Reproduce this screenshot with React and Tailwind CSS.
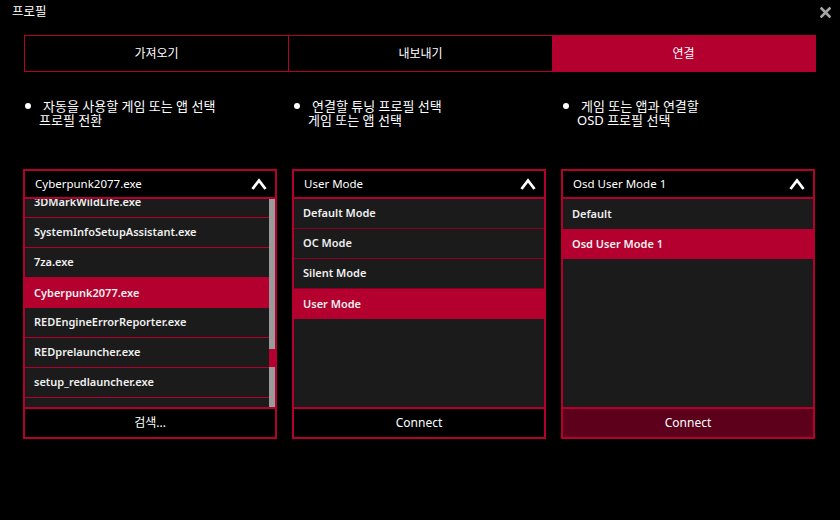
import React from 'react';

const RED = 'border-[#b4002e]';

const exeList = [
    '3DMarkWildLife.exe',
    'SystemInfoSetupAssistant.exe',
    '7za.exe',
    'Cyberpunk2077.exe',
    'REDEngineErrorReporter.exe',
    'REDprelauncher.exe',
    'setup_redlauncher.exe',
    '',
];

const tuningModes = ['Default Mode', 'OC Mode', 'Silent Mode', 'User Mode'];
const osdModes = ['Default', 'Osd User Mode 1'];

const Caret = () => (
    <svg width="16" height="12" viewBox="0 0 16 12" className="shrink-0">
        <polyline points="1.5,11 8,2.5 14.5,11" fill="none" stroke="#fff" strokeWidth="2.8" strokeLinejoin="miter" />
    </svg>
);

const CloseIcon = () => (
    <svg width="11" height="11" viewBox="0 0 11 11">
        <path d="M1.5 1.5 L9.5 9.5 M9.5 1.5 L1.5 9.5" stroke="#a6a6a6" strokeWidth="2.6" strokeLinecap="square" />
    </svg>
);

const Bullet = ({ lines }) => (
    <div className="flex items-start text-[13px] leading-[14px] text-white">
        <span className="mt-[4px] ml-[1px] w-[6px] h-[6px] rounded-full bg-white shrink-0" />
        <div className="ml-[8px]">
            <p className="indent-[4px]">{lines[0]}</p>
            <p>{lines[1]}</p>
        </div>
    </div>
);

const DropHeader = ({ label }) => (
    <div className={`h-[28px] flex items-center justify-between pl-[10px] pr-[8px] border-b-2 ${RED} bg-black text-[11.5px] text-white`}>
        <span>{label}</span>
        <Caret />
    </div>
);

const Row = ({ label, active, line }) => (
    <div
        className={`h-[30px] shrink-0 flex items-center px-[9px] text-[11px] font-semibold text-[#f0f0f0] ${
            active ? 'bg-[#b4002e]' : `bg-[#1b1b1b] ${line}`
        }`}
    >
        {label}
    </div>
);

const FootButton = ({ label, dark }) => (
    <div className={`h-[30px] flex items-center justify-center border-t-2 ${RED} text-[12px] text-white ${dark ? 'bg-[#5c001b]' : 'bg-black'}`}>
        {label}
    </div>
);

export default function App() {
    return (
        <div className="w-[840px] h-[520px] bg-black overflow-hidden font-['Noto_Sans','Noto_Sans_CJK_KR',sans-serif]">
            {/* title bar */}
            <div className="h-[24px] flex items-center justify-between pl-[12px] pr-[9px]">
                <span className="text-[12.5px] text-white">프로필</span>
                <CloseIcon />
            </div>

            {/* tabs */}
            <div className={`mt-[11px] ml-[24px] w-[792px] h-[37px] flex border ${RED} text-[12px] text-white`}>
                <div className={`flex-1 flex items-center justify-center border-r ${RED}`}>가져오기</div>
                <div className="flex-1 flex items-center justify-center">내보내기</div>
                <div className="flex-1 flex items-center justify-center bg-[#b4002e]">연결</div>
            </div>

            {/* instructions */}
            <div className="mt-[27px] ml-[24px] w-[792px] grid grid-cols-3 gap-[15px]">
                <Bullet lines={['자동을 사용할 게임 또는 앱 선택', '프로필 전환']} />
                <Bullet lines={['연결할 튜닝 프로필 선택', '게임 또는 앱 선택']} />
                <Bullet lines={['게임 또는 앱과 연결할', 'OSD 프로필 선택']} />
            </div>

            {/* selectors */}
            <div className="mt-[42px] ml-[23px] w-[792px] grid grid-cols-3 gap-[15px]">
                <div className={`h-[270px] flex flex-col border-2 ${RED}`}>
                    <DropHeader label="Cyberpunk2077.exe" />
                    <div className="flex-1 flex min-h-0 bg-[#1b1b1b]">
                        <div className="flex-1 min-w-0 overflow-hidden">
                            <div className="-mt-[11px] flex flex-col">
                                {exeList.map((name, i) => (
                                    <Row key={i} label={name} active={name === 'Cyberpunk2077.exe'} line={`border-b ${RED}`} />
                                ))}
                            </div>
                        </div>
                        <div className="w-[6px] flex flex-col">
                            <div className="h-[150px] bg-[#9a9a9a]" />
                            <div className="h-[18px] bg-[#b4002e]" />
                            <div className="flex-1 bg-[#9a9a9a]" />
                        </div>
                    </div>
                    <FootButton label="검색..." />
                </div>

                <div className={`h-[270px] flex flex-col border-2 ${RED}`}>
                    <DropHeader label="User Mode" />
                    <div className="flex-1 flex flex-col bg-[#1b1b1b]">
                        {tuningModes.map((m) => (
                            <Row key={m} label={m} active={m === 'User Mode'} line="border-b border-[#8a0024]" />
                        ))}
                    </div>
                    <FootButton label="Connect" />
                </div>

                <div className={`h-[270px] flex flex-col border-2 ${RED}`}>
                    <DropHeader label="Osd User Mode 1" />
                    <div className="flex-1 flex flex-col bg-[#1b1b1b]">
                        {osdModes.map((m) => (
                            <Row key={m} label={m} active={m === 'Osd User Mode 1'} line="" />
                        ))}
                    </div>
                    <FootButton label="Connect" dark />
                </div>
            </div>
        </div>
    );
}
